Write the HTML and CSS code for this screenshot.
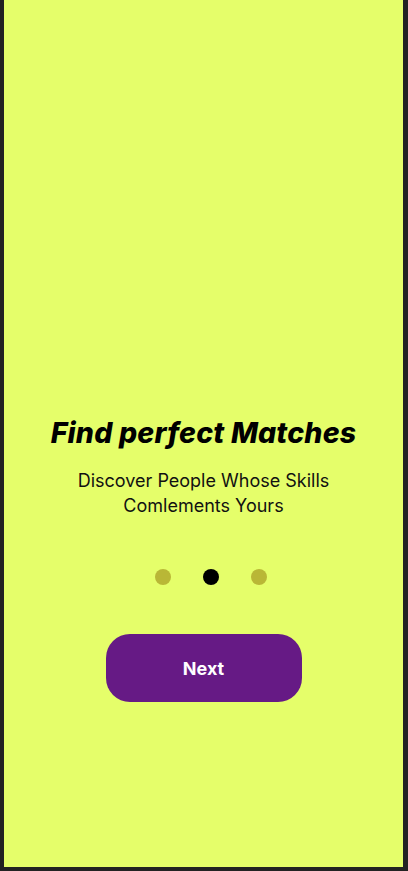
FILE: index.html
```html
<!DOCTYPE html>
<html lang="en">
<head>
<meta charset="utf-8">
<title>Onboarding</title>
<link rel="stylesheet" href="styles.css">
</head>
<body>
<div class="frame">
  <main class="screen">
    <h1 class="title">Find perfect Matches</h1>
    <p class="subtitle">Discover People Whose Skills<br>Comlements Yours</p>
    <div class="dots">
      <span class="dot"></span>
      <span class="dot active"></span>
      <span class="dot"></span>
    </div>
    <button class="next" type="button">Next</button>
  </main>
</div>
</body>
</html>
```

FILE: styles.css
```css
html, body {
  margin: 0;
  padding: 0;
  background: #222222;
}
body {
  width: 408px;
  height: 871px;
  overflow: hidden;
  font-family: Inter, "Noto Sans", sans-serif;
}
.frame {
  padding-left: 4px;
  width: 399px;
  height: 867px;
}
.screen {
  box-sizing: border-box;
  width: 399px;
  height: 867px;
  background: #e5fe6a;
  display: flex;
  flex-direction: column;
  align-items: center;
  padding-top: 416px;
}
.title {
  margin: 0;
  font-size: 28.5px;
  line-height: 34px;
  font-weight: 800;
  font-style: italic;
  color: #000;
  letter-spacing: 0.2px;
}
.subtitle {
  margin: 18px 0 0;
  font-size: 18px;
  line-height: 25px;
  font-weight: 400;
  color: #111;
  text-align: center;
}
.dots {
  margin-top: 51px;
  margin-left: 14px;
  display: flex;
  gap: 32px;
}
.dot {
  width: 16px;
  height: 16px;
  border-radius: 50%;
  background: #b9b736;
}
.dot.active {
  background: #000;
}
.next {
  margin-top: 49px;
  width: 196px;
  height: 68px;
  border: none;
  border-radius: 24px;
  background: #661a85;
  color: #fff;
  font-family: Inter, "Noto Sans", sans-serif;
  font-size: 18px;
  font-weight: 700;
  padding: 0;
}
```
